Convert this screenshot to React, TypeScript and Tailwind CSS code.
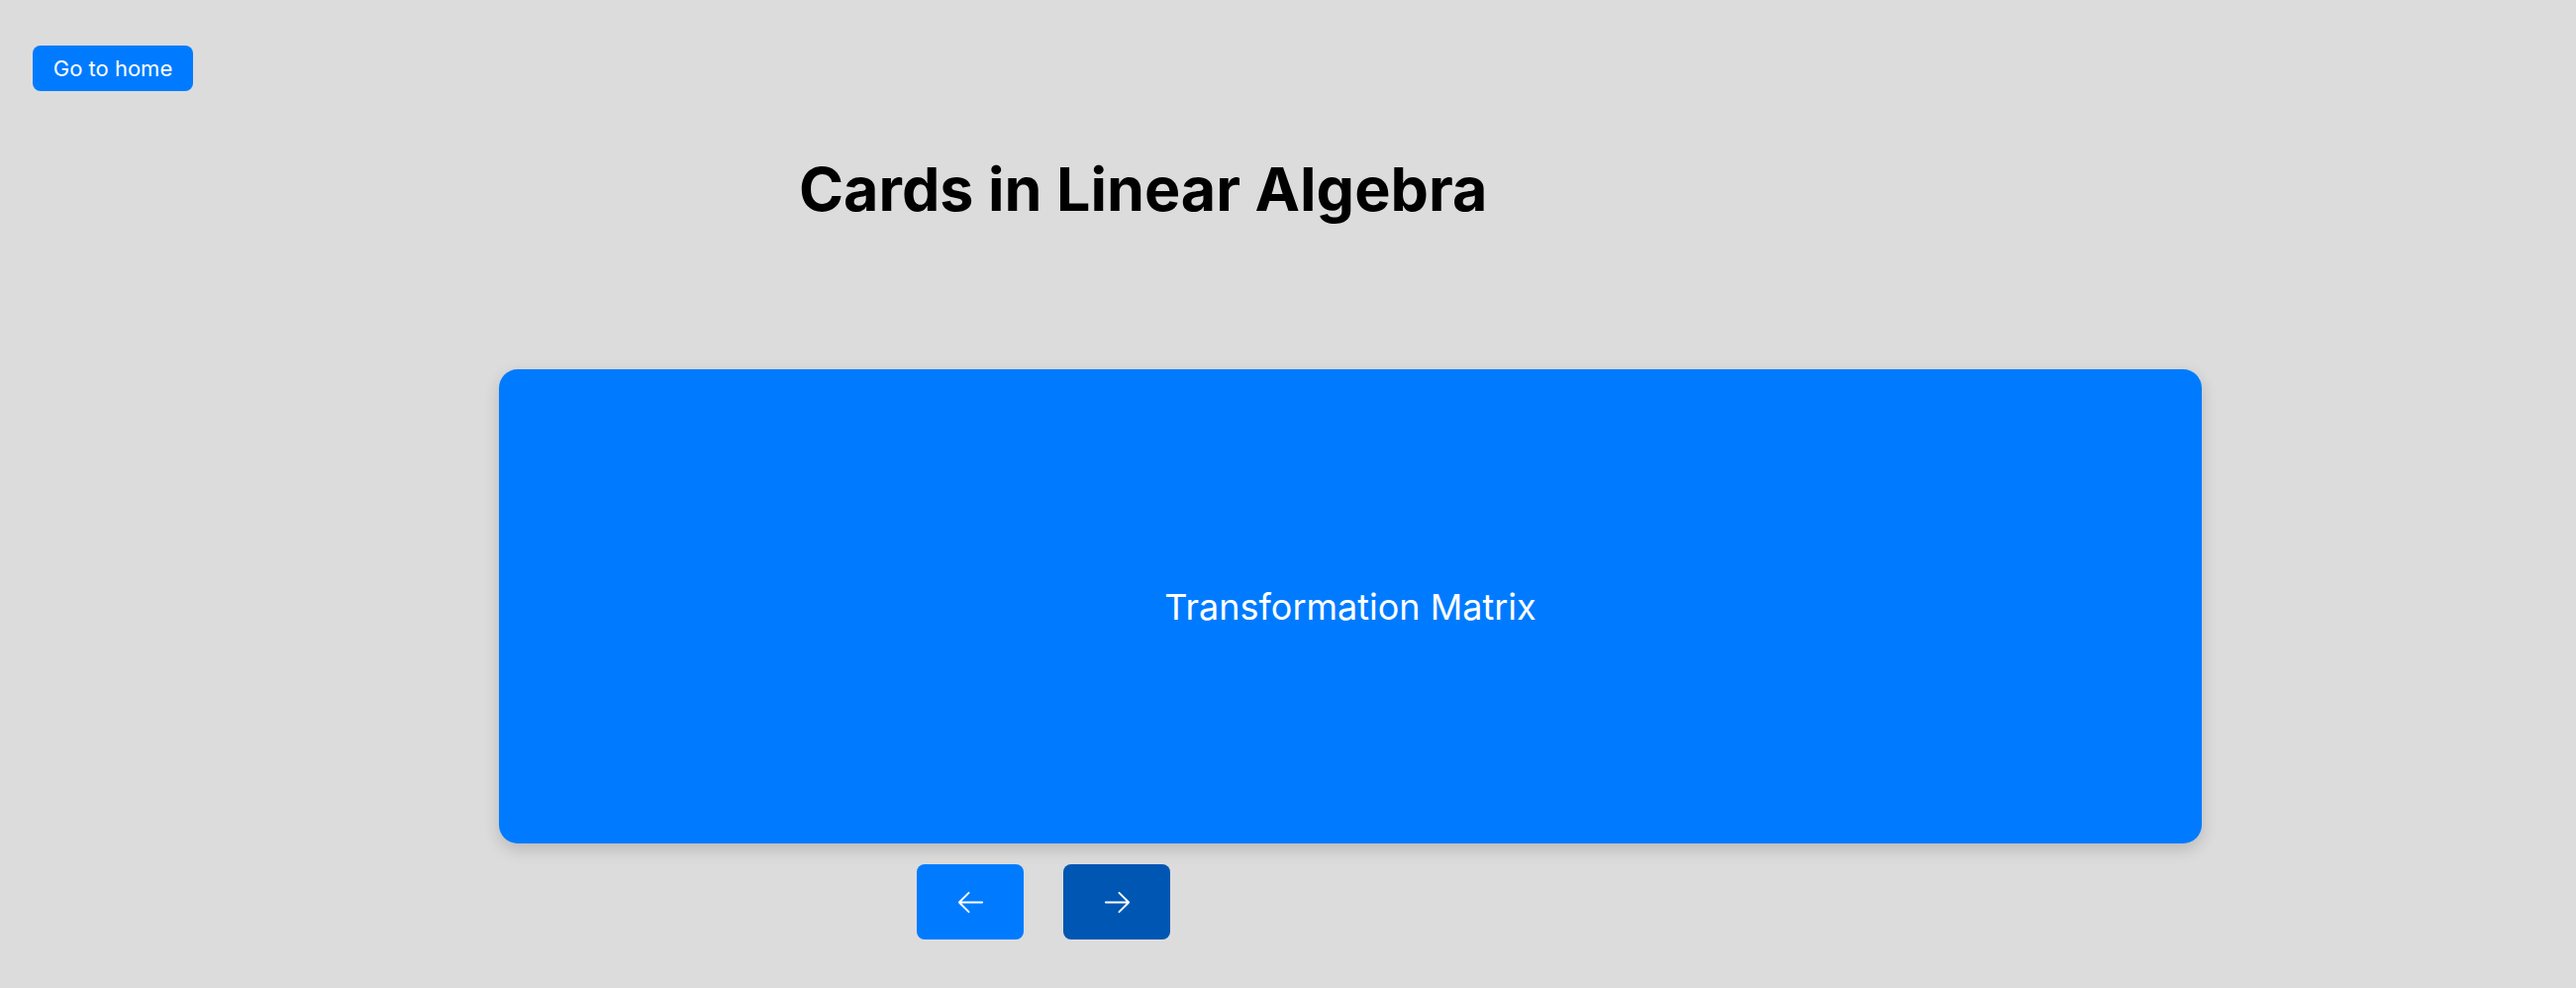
const ArrowIcon = ({ dir }: { dir: "left" | "right" }) => (
  <svg
    width="31"
    height="31"
    viewBox="0 0 24 24"
    fill="none"
    stroke="currentColor"
    strokeWidth={1.5}
    strokeLinecap="round"
    strokeLinejoin="round"
  >
    {dir === "left" ? (
      <path d="M10.5 19.5 3 12m0 0 7.5-7.5M3 12h18" />
    ) : (
      <path d="M13.5 4.5 21 12m0 0-7.5 7.5M21 12H3" />
    )}
  </svg>
);

export default function App() {
  return (
    <div className="min-h-screen bg-[#dcdcdc] pl-[33px] pt-[46px] font-['Inter',sans-serif]">
      <button className="flex h-[46px] w-[162px] items-center justify-center rounded-[8px] bg-[#007bff] text-[22px] text-white">
        Go to home
      </button>

      <h1 className="ml-[774px] mt-[69px] text-[61px] font-bold leading-none text-black">
        Cards in Linear Algebra
      </h1>

      <div className="ml-[471px] mt-[151px] flex h-[479px] w-[1720px] items-center justify-center rounded-[19px] bg-[#007bff] shadow-[0_6px_16px_rgba(0,0,0,0.16)]">
        <span className="text-[36px] text-white">Transformation Matrix</span>
      </div>

      <div className="ml-[893px] mt-[21px] flex gap-[40px]">
        <button className="flex h-[76px] w-[108px] items-center justify-center rounded-[8px] bg-[#007bff] text-white">
          <ArrowIcon dir="left" />
        </button>
        <button className="flex h-[76px] w-[108px] items-center justify-center rounded-[8px] bg-[#0056b3] text-white">
          <ArrowIcon dir="right" />
        </button>
      </div>
    </div>
  );
}
